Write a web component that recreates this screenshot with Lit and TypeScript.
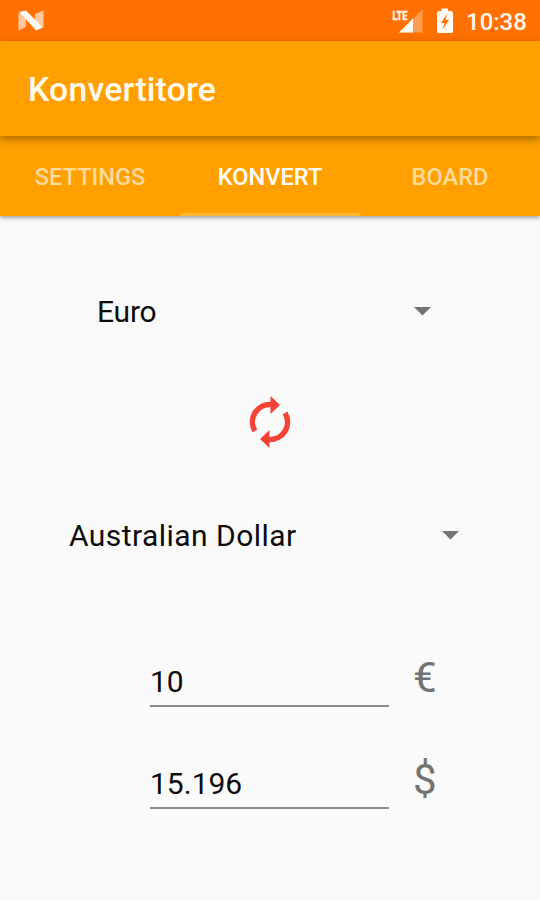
import { LitElement, html, css } from "lit";
import { customElement, property } from "lit/decorators.js";

@customElement("status-bar")
class StatusBar extends LitElement {
  static styles = css`
    :host {
      display: flex;
      align-items: center;
      height: 41px;
      box-sizing: border-box;
      padding: 0 14px 0 18px;
      background: #ff7000;
      color: #fff6ee;
    }
    svg { display: block; }
    .logo { margin-right: auto; }
    .signal { margin-right: 14px; }
    .battery { margin-right: 13px; }
    .clock { font-size: 24px; font-weight: 500; line-height: 41px; padding-top: 2px; height: 39px; width: 60px; white-space: nowrap; }
    .lte { font: 700 13px Roboto, sans-serif; }
  `;
  render() {
    return html`
      <svg class="logo" width="26" height="22" viewBox="0 0 26 22">
        <path d="M0.500 3.500 8 2V17L0.500 20.500Z" fill="#ffc7a0" />
        <path d="M17 4 25.500 0.500V17L17 20Z" fill="#ffc7a0" />
        <path d="M1.500 2 8 .5 25 17.500 18 20.500Z" fill="#fffaf6" />
      </svg>
      <svg class="signal" width="31" height="26" viewBox="0 0 31 26">
        <path d="M30.500 1.500V24.500H7Z" fill="#ff9d57" />
        <path d="M21 10.500V24.500H7Z" fill="#fffaf6" />
        <text class="lte" x="0.500" y="11.500" textLength="15" lengthAdjust="spacingAndGlyphs" fill="#fff3e8" stroke="#fff3e8" stroke-width="0.500">LTE</text>
      </svg>
      <svg class="battery" width="16" height="26" viewBox="0 0 16 26">
        <path d="M4.500 0.500H11V3H14Q16 3 16 5V23.500Q16 25 14 25H2Q0 25 0 23.500V5Q0 3 2 3H4.500Z" fill="#fffaf6" />
        <path d="M10 6 4 15H7.500L5.500 21.500L12 12H8.500Z" fill="#ff7000" />
      </svg>
      <span class="clock">10:38</span>
    `;
  }
}

@customElement("tab-strip")
class TabStrip extends LitElement {
  @property({ type: Array }) tabs: string[] = [];
  @property() active = "";
  static styles = css`
    :host {
      display: grid;
      grid-template-columns: repeat(3, 1fr);
      height: 80px;
      background: #ffa000;
      box-shadow: 0 2px 4px rgba(0, 0, 0, 0.36);
    }
    .tab {
      box-sizing: border-box;
      padding-top: 5px;
      border-bottom: 3px solid transparent;
      display: flex;
      align-items: center;
      justify-content: center;
      font-size: 23.600px;
      font-weight: 500;
      color: #ffdb9a;
    }
    .active { color: #fff; border-color: #ffb732; }
  `;
  render() {
    return this.tabs.map(
      (t) => html`<div class="tab ${t === this.active ? "active" : ""}"><span>${t}</span></div>`
    );
  }
}

@customElement("currency-spinner")
class CurrencySpinner extends LitElement {
  @property() label = "";
  static styles = css`
    :host {
      display: flex;
      align-items: center;
      justify-content: space-between;
      height: 40px;
      font-size: 30px;
      color: #0c0c0c;
    }
    svg { display: block; }
  `;
  render() {
    return html`<span>${this.label}</span>
      <svg width="17" height="9" viewBox="0 0 17 9"><path d="M0 0H17L8.500 8.500Z" fill="#737373" /></svg>`;
  }
}

@customElement("amount-field")
class AmountField extends LitElement {
  @property() value = "";
  @property() symbol = "";
  static styles = css`
    :host { display: flex; height: 60px; }
    .value {
      box-sizing: border-box;
      width: 239px;
      height: 60px;
      padding-top: 14px;
      border-bottom: 2px solid #8a8a8a;
      font-size: 30px;
      line-height: 42px;
      color: #0c0c0c;
    }
    .symbol {
      width: 24px;
      margin-left: 24px;
      font-size: 42px;
      line-height: 62px;
      color: #737373;
    }
  `;
  render() {
    return html`<div class="value">${this.value}</div><div class="symbol">${this.symbol}</div>`;
  }
}

@customElement("app-root")
class AppRoot extends LitElement {
  static styles = css`
    :host {
      display: flex;
      flex-direction: column;
      width: 540px;
      height: 900px;
      overflow: hidden;
      background: #fafafa;
      font-family: Roboto, sans-serif;
    }
    .bar {
      position: relative;
      z-index: 1;
      height: 95px;
      box-sizing: border-box;
      padding: 0 28px;
      background: #ffa000;
      color: #fffaf0;
      font-size: 33.750px;
      font-weight: 500;
      letter-spacing: 0.200px;
      line-height: 97px;
      box-shadow: 0 3px 8px rgba(0, 0, 0, 0.36);
    }
    .from { margin: 75px 109px 0 97px; letter-spacing: -0.200px; }
    .swap { display: block; margin: 61px auto 0; }
    .to { margin: 63px 81px 0 69px; letter-spacing: 0.450px; }
    .amounts { margin: 92px 0 0 150px; display: grid; gap: 42px; }
  `;
  render() {
    return html`
      <status-bar></status-bar>
      <header class="bar">Konvertitore</header>
      <tab-strip .tabs=${["SETTINGS", "KONVERT", "BOARD"]} active="KONVERT"></tab-strip>
      <currency-spinner class="from" label="Euro"></currency-spinner>
      <svg class="swap" width="60" height="60" viewBox="0 0 24 24">
        <g fill="none" stroke="#f44336" stroke-width="2.200">
          <path d="M12.500 5A7 7 0 0 0 5.970 15.600" />
          <path d="M11.500 19A7 7 0 0 0 18.030 8.400" />
        </g>
        <path d="M12.200 1.600 16 5.200 12.200 8.800ZM11.800 15.200 8 18.800 11.800 22.400Z" fill="#f44336" />
      </svg>
      <currency-spinner class="to" label="Australian Dollar"></currency-spinner>
      <div class="amounts">
        <amount-field value="10" symbol="€"></amount-field>
        <amount-field value="15.196" symbol="$"></amount-field>
      </div>
    `;
  }
}
